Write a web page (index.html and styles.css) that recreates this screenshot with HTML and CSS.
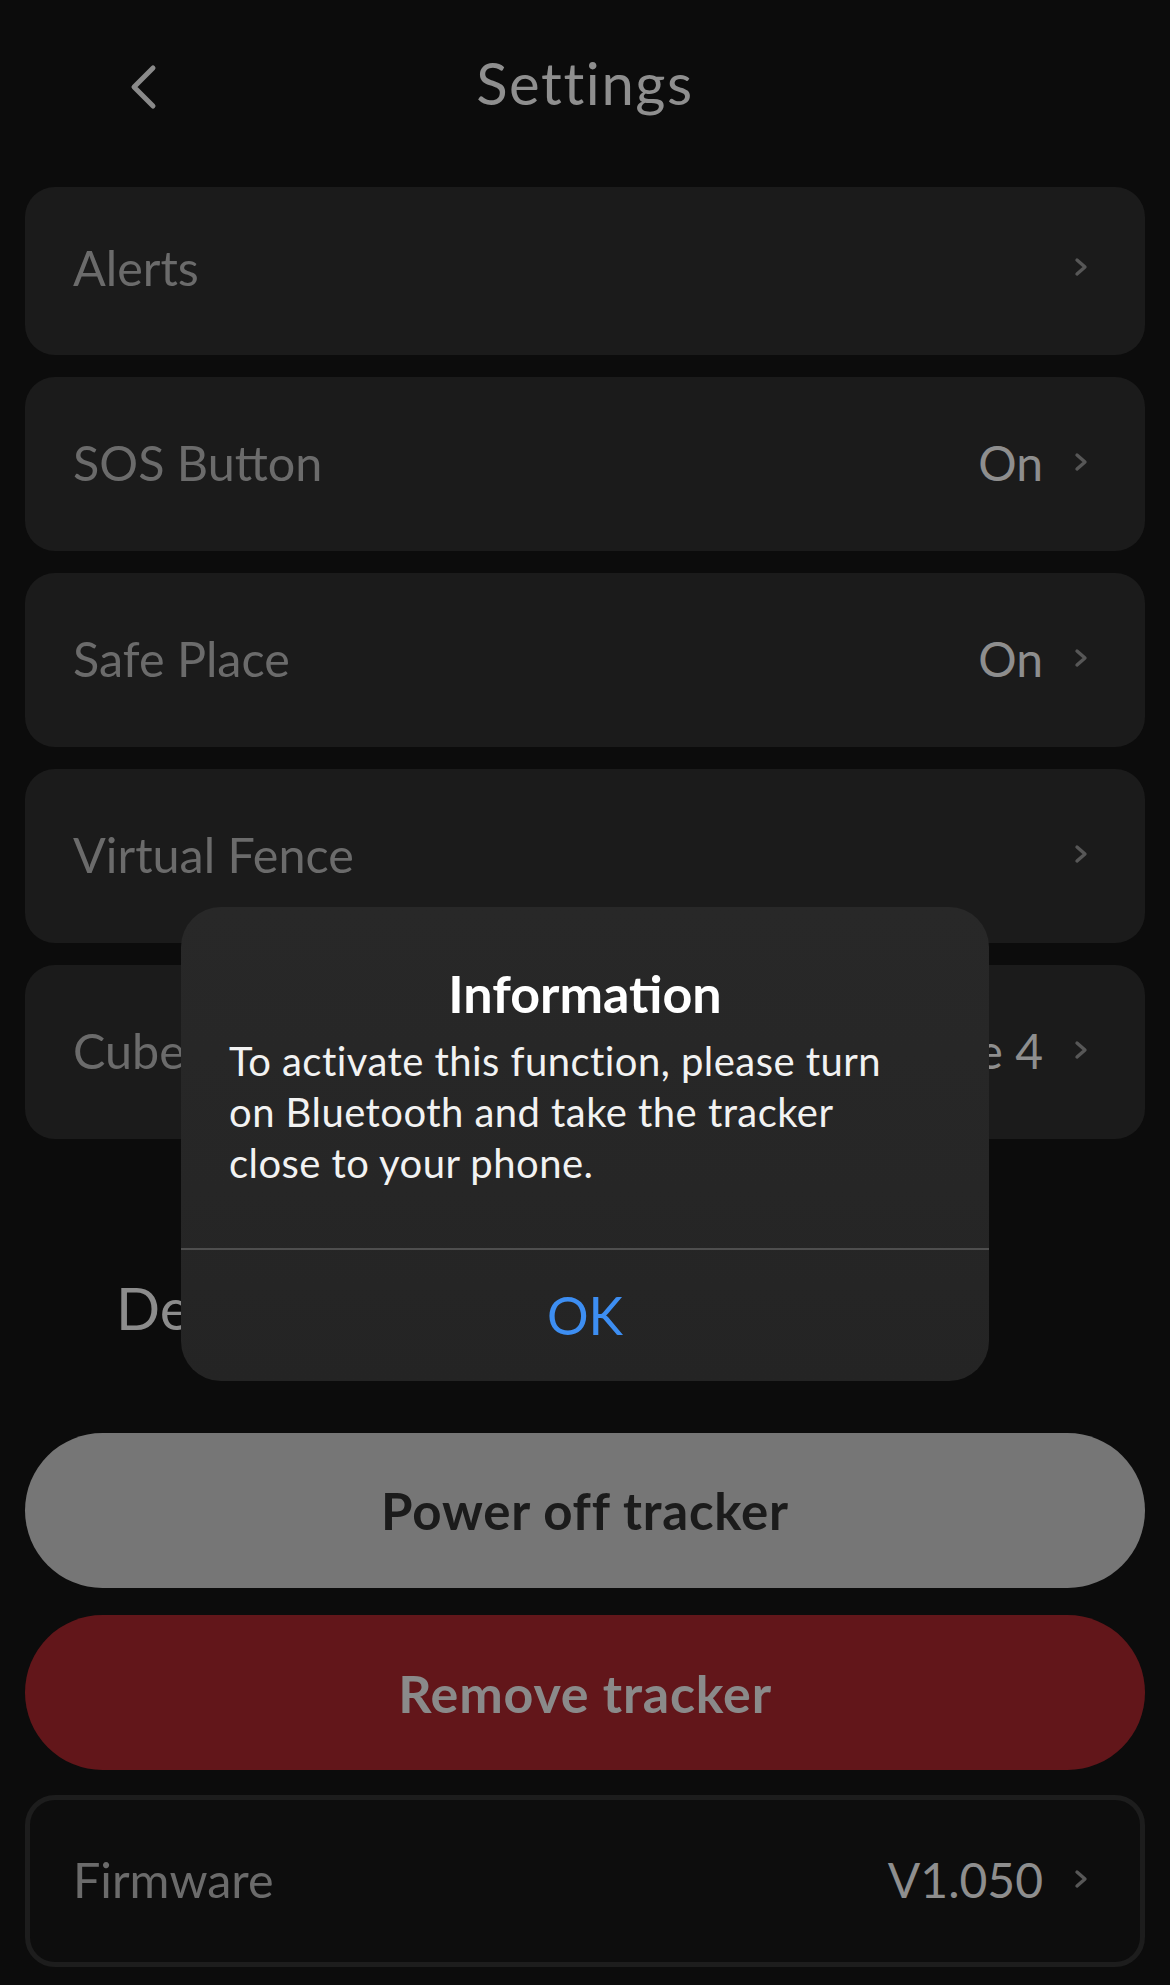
FILE: index.html
```html
<!DOCTYPE html>
<html lang="en">
<head>
<meta charset="utf-8">
<title>Settings</title>
<link rel="stylesheet" href="styles.css">
</head>
<body>
<div class="screen">
  <header class="navbar">
    <div class="nav-left">
      <svg class="back-icon" width="30" height="46" viewBox="0 0 30 46" aria-hidden="true">
        <path d="M25 4 L6 23 L25 42" fill="none" stroke="#8a8a8a" stroke-width="5" stroke-linecap="round" stroke-linejoin="round"/>
      </svg>
    </div>
    <h1 class="nav-title">Settings</h1>
    <div class="nav-right"></div>
  </header>

  <section class="list">
    <div class="row row-first">
      <span class="row-label">Alerts</span>
      <svg class="chev" width="16" height="20" viewBox="0 0 16 20" aria-hidden="true"><path d="M4 3 L12 10 L4 17" fill="none" stroke="#575757" stroke-width="3.4" stroke-linecap="round" stroke-linejoin="round"/></svg>
    </div>
    <div class="row">
      <span class="row-label">SOS Button</span>
      <span class="row-value">On</span>
      <svg class="chev" width="16" height="20" viewBox="0 0 16 20" aria-hidden="true"><path d="M4 3 L12 10 L4 17" fill="none" stroke="#575757" stroke-width="3.4" stroke-linecap="round" stroke-linejoin="round"/></svg>
    </div>
    <div class="row">
      <span class="row-label">Safe Place</span>
      <span class="row-value">On</span>
      <svg class="chev" width="16" height="20" viewBox="0 0 16 20" aria-hidden="true"><path d="M4 3 L12 10 L4 17" fill="none" stroke="#575757" stroke-width="3.4" stroke-linecap="round" stroke-linejoin="round"/></svg>
    </div>
    <div class="row">
      <span class="row-label">Virtual Fence</span>
      <svg class="chev" width="16" height="20" viewBox="0 0 16 20" aria-hidden="true"><path d="M4 3 L12 10 L4 17" fill="none" stroke="#575757" stroke-width="3.4" stroke-linecap="round" stroke-linejoin="round"/></svg>
    </div>
    <div class="row">
      <span class="row-label">Cube name</span>
      <span class="row-value">Cube 4</span>
      <svg class="chev" width="16" height="20" viewBox="0 0 16 20" aria-hidden="true"><path d="M4 3 L12 10 L4 17" fill="none" stroke="#575757" stroke-width="3.4" stroke-linecap="round" stroke-linejoin="round"/></svg>
    </div>
  </section>

  <h2 class="section-title">Device</h2>

  <section class="actions">
    <button class="btn btn-power">Power off tracker</button>
    <button class="btn btn-remove">Remove tracker</button>
  </section>

  <section class="list list-bottom">
    <div class="row row-outline">
      <span class="row-label">Firmware</span>
      <span class="row-value">V1.050</span>
      <svg class="chev" width="16" height="20" viewBox="0 0 16 20" aria-hidden="true"><path d="M4 3 L12 10 L4 17" fill="none" stroke="#575757" stroke-width="3.4" stroke-linecap="round" stroke-linejoin="round"/></svg>
    </div>
  </section>

  <div class="alert" role="alertdialog">
    <div class="alert-body">
      <div class="alert-title">Information</div>
      <div class="alert-message">To activate this function, please turn on Bluetooth and take the tracker close to your phone.</div>
    </div>
    <div class="alert-actions">
      <button class="alert-btn">OK</button>
    </div>
  </div>
</div>
</body>
</html>
```

FILE: styles.css
```css
* { box-sizing: border-box; }

html, body {
  margin: 0;
  padding: 0;
  background: #0c0c0c;
}

body {
  font-family: "Lato", "Open Sans", sans-serif;
  width: 1170px;
  height: 1985px;
  overflow: hidden;
}

.screen {
  position: relative;
  width: 1170px;
  height: 1985px;
  background: #0c0c0c;
}

/* nav bar */
.navbar {
  display: grid;
  grid-template-columns: 1fr auto 1fr;
  align-items: start;
  height: 187px;
}

.nav-left {
  padding-left: 128px;
  padding-top: 64px;
}

.back-icon { display: block; }

.nav-title {
  margin: 0;
  padding-top: 48px;
  font-size: 58px;
  line-height: 70px;
  font-weight: 400;
  color: #8f8f8f;
  letter-spacing: 1.6px;
}

/* rows */
.list {
  display: flex;
  flex-direction: column;
  gap: 22px;
  padding: 0 25px;
}

.row {
  display: flex;
  align-items: center;
  height: 174px;
  padding: 0 56px 4px 48px;
  background: #1b1b1b;
  border-radius: 30px;
}

.row-first { height: 168px; padding-bottom: 8px; }

.row-label {
  font-size: 48.5px;
  color: #6b6b6b;
  flex: 1;
}

.row-value {
  font-size: 48px;
  color: #8e8e8e;
}

.chev {
  display: block;
  margin-left: 30px;
}

/* section title */
.section-title {
  margin: 0;
  padding: 134px 0 0 116px;
  height: 294px;
  font-size: 58px;
  line-height: 70px;
  font-weight: 400;
  color: #8c8c8c;
}

/* action buttons */
.actions {
  display: flex;
  flex-direction: column;
  gap: 27px;
  padding: 0 25px;
}

.btn {
  display: block;
  width: 100%;
  height: 155px;
  border: 0;
  border-radius: 78px;
  font-family: "Lato", "Open Sans", sans-serif;
  font-size: 51px;
  font-weight: 700;
  letter-spacing: 0.8px;
}

.btn-power {
  background: #767676;
  color: #1b1b1b;
}

.btn-remove {
  background: #62161a;
  color: #8a8a8a;
  font-size: 52px;
  letter-spacing: 0.8px;
}

.list-bottom {
  margin-top: 25px;
}

.row-outline {
  height: 172px;
  background: #0d0d0d;
  border: 5px solid #1d1d1d;
  padding: 0 51px 4px 43px;
}

/* alert dialog */
.alert {
  position: absolute;
  left: 181px;
  top: 907px;
  width: 808px;
  height: 474px;
  border-radius: 40px;
  background: linear-gradient(180deg, #282828 0%, #262626 60%, #242424 100%);
  display: flex;
  flex-direction: column;
  overflow: hidden;
}

.alert-body {
  height: 343px;
  padding: 54px 72px 0 48px;
  border-bottom: 2px solid #4e4e4e;
}

.alert-title {
  text-align: center;
  font-size: 52px;
  line-height: 64px;
  font-weight: 700;
  color: #ffffff;
  margin-right: -24px;
}

.alert-message {
  margin-top: 11px;
  font-size: 40px;
  line-height: 51px;
  color: #f2f2f2;
  letter-spacing: 0.45px;
}

.alert-actions {
  flex: 1;
  display: flex;
}

.alert-btn {
  flex: 1;
  border: 0;
  background: transparent;
  font-family: "Lato", "Open Sans", sans-serif;
  font-size: 52px;
  color: #3d8ef2;
  padding: 0 0 2px 0;
}
```
